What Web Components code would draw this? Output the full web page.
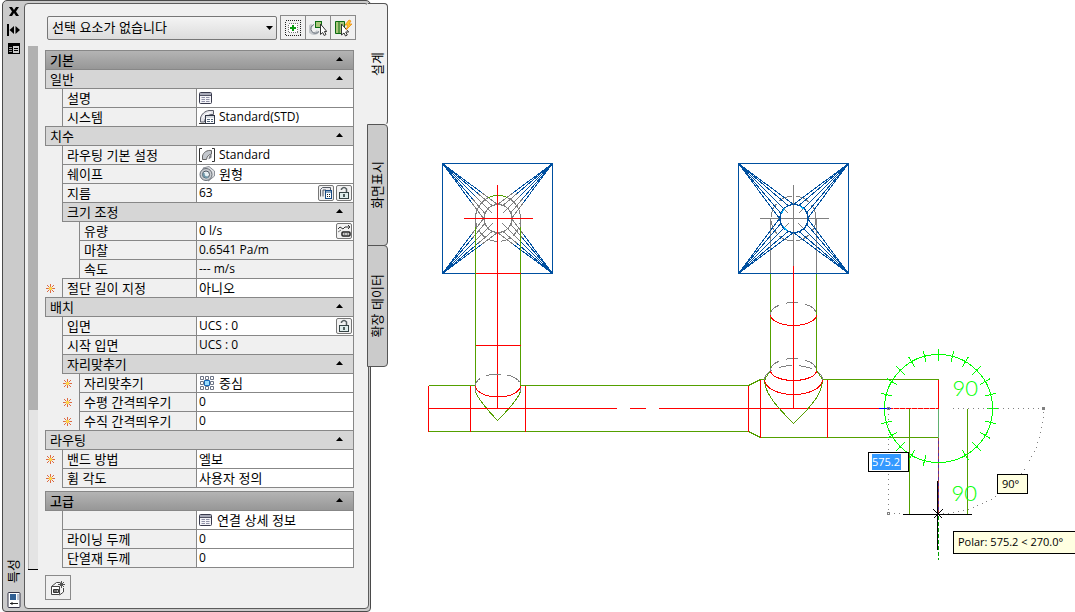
<!DOCTYPE html>
<html lang="ko">
<head>
<meta charset="utf-8">
<title>특성</title>
<style>
html, body { height: 100%; }
body { margin: 0; background: #fff; color: #000; font: 13px/18px "Noto Sans CJK KR", "Noto Sans", sans-serif; overflow: hidden; }
</style>
</head>
<body>
<cad-workspace></cad-workspace>

<script>
const define = (name, html, setup) => {
  const template = document.createElement('template');
  template.innerHTML = html;
  customElements.define(name, class extends HTMLElement {
    constructor() {
      super();
      this.attachShadow({ mode: 'open' }).append(template.content.cloneNode(true));
    }
    connectedCallback() {
      if (setup && !this.ready) { this.ready = true; setup(this, this.shadowRoot); }
    }
  });
};

/* ---------- icons ---------- */
const ICONS = {
  close: [12, 11, '<path d="M1 1h3l2 3 2-3h3L8 5.500l3 4.500H8L6 7l-2 3H1l3-4.500z" fill="#000"/>'],
  autohide: [13, 12, '<path d="M1 0v12" stroke="#000" stroke-width="2"/><path d="M7 2v8L2.500 6zM8.500 2v8L13 6z" fill="#000"/>'],
  menu: [12, 11, '<path d="M0 0h12v11H0z" fill="#000"/><path d="M5 3h6v7H5z" fill="#ccc"/><path d="M6 5.500h4M6 7.500h4" stroke="#000"/><path d="M1 4.500h3M1 6.500h3M1 8.500h3" stroke="#999"/>'],
  palette: [14, 16, '<rect x="1" y=".5" width="12" height="15" rx="1" fill="#fff" stroke="#334"/><path d="M3 2h6v6H3z" fill="#2f5f93"/><path d="M10 2h2v6h-2z" fill="#b8c4d4"/><path d="M3 11.500h8M5 10v3" stroke="#222"/>'],
  select: [18, 18, '<g fill="none" shape-rendering="crispEdges"><rect x="1.500" y="1.500" width="15" height="15" stroke="#222" stroke-dasharray="1 1"/><rect x="4.500" y="4.500" width="9" height="9" fill="#fff" stroke="#777" stroke-dasharray="1 1"/></g><path d="M8 6h2v2h2v2h-2v2H8v-2H6V8h2z" fill="#0a9a12"/>'],
  pick: [18, 18, '<path d="M3 6a4.500 4.500 0 1 0 6 6" fill="none" stroke="#c4c8cc" stroke-width="3"/><path d="M5 5.500a4.500 4.500 0 1 0 5 7" fill="none" stroke="#68707a"/><rect x="6.500" y="2.500" width="6" height="6" fill="#aac77a" stroke="#0b6b12"/><path d="M11.500 5v10.500l2.200-2 1.500 3 1.800-1-1.600-3h2.400z" fill="#fff" stroke="#333"/>'],
  quick: [18, 18, '<path d="M1.500 2.500h9v12h-9z" fill="#aac77a" stroke="#0b6b12"/><path d="M5 3v11" stroke="#0b6b12"/><path d="M7.500 5v11l2.500-2 1.500 3 1.800-1-1.600-3h3z" fill="#fff" stroke="#333"/><path d="M15 1l-4 5h3l-2 5 6-6h-3l2-3z" fill="#ffcb28" stroke="#ee8b12" stroke-width=".8"/>'],
  sheet: [14, 12, '<rect x=".5" y=".5" width="12" height="11" rx="1" fill="#f4f4f8" stroke="#383a4c"/><path d="M1 2h11" stroke="#a8aab8" stroke-width="2"/><path d="M1 3.500h11" stroke="#505264"/><path d="M2.500 5.500h3.500M7 5.500h3.500M2.500 7.500h3.500M7 7.500h3.500M2.500 9.500h3.500M7 9.500h3.500" stroke="#9092a8"/>'],
  system: [16, 16, '<path d="M1.500 13V9C2.500 5 6 2 10 1.500h4.500v4H12C9.500 6 6 8 5.500 13z" fill="#e4e4ea" stroke="#5a5c68"/><path d="M3.500 9C5 6 8 4 12 3.500" fill="none" stroke="#fff"/><rect x="6.500" y="6.500" width="9" height="8" fill="#fff" stroke="#303646"/><path d="M7 8h8" stroke="#b0b8c4"/><path d="M8 10.500h3M12 10.500h2M8 12.500h3M12 12.500h2" stroke="#53667c"/><path d="M0 14.500h6" stroke="#333"/>'],
  routing: [16, 16, '<path d="M3 1.500H.5v13H3M13 1.500h2.500v13H13" fill="none" stroke="#333"/><path d="M3.500 12.500V9C4.500 5 8 3 12.500 3.500v3.500C10 7.500 8 9 7.500 12.500z" fill="#c4c8ce" stroke="#666"/><path d="M9.500 12.500c0-2.500 1-4.500 3-5.500v3.500z" fill="#7d8088"/>'],
  round: [16, 16, '<path d="M4 2l6-1.500 5.500 4.500v5l-6 5z" fill="#dfe1e4" stroke="#8c9098"/><circle cx="7" cy="8.500" r="6" fill="#c9ccd0" stroke="#676d75"/><circle cx="7" cy="8.500" r="3.500" fill="#e8f1f5" stroke="#4f5864"/><path d="M5 7a3 3 0 0 0 4 4" fill="none" stroke="#6f98aa" stroke-width="2"/>'],
  align: [16, 16, '<g fill="#fff" stroke="#6c7486"><path d="M1.500 1.500h3v3h-3zM6.500 1.500h3v3h-3zM11.500 1.500h3v3h-3zM1.500 6.500h3v3h-3zM11.500 6.500h3v3h-3zM1.500 11.500h3v3h-3zM6.500 11.500h3v3h-3zM11.500 11.500h3v3h-3z"/></g><path d="M5.500 5.500h5v5h-5z" fill="#98dcff" stroke="#1768b8"/>'],
  lock: [14, 14, '<rect x="2.500" y="6.500" width="9" height="6" fill="#dfeceb" stroke="#354344"/><path d="M4.500 4V3Q7 0 9.500 3V6" fill="none" stroke="#555e60" stroke-width="1.500"/><path d="M7 8v3" stroke="#203030" stroke-width="1.500"/>'],
  calc: [14, 14, '<path d="M1.500 10.500v-7l2-2h8v3M4 10.500V4h3" fill="#e8e8ec" stroke="#555b64"/><rect x="6.500" y="4.500" width="6" height="8" fill="#fff" stroke="#174a83"/><path d="M7 6h5" stroke="#174a83"/><path d="M8 8.500h1m1 0h1M8 10.500h1m1 0h1" stroke="#222"/>'],
  flow: [14, 14, '<path d="M1 5l2-2 3 2 2-2h5M11 1l2 2-2 2" fill="none" stroke="#333"/><path d="M1 8l3-2" stroke="#777"/><rect x="5" y="8" width="8" height="4" rx="1" fill="#fff" stroke="#222" stroke-width="1.500"/><path d="M6.500 10h2m1 0h2" stroke="#222"/>'],
  addset: [18, 18, '<path d="M2.500 7.500l5-4h4M14.500 9v4l-4 3" fill="#fff" stroke="#444"/><path d="M2.500 7.500h8v8h-8z" fill="#fff" stroke="#444"/><path d="M4.500 10.500h5v3h-5z" fill="#bbb" stroke="#333"/><path d="M5 12h3" stroke="#222"/><path d="M12.500 2v7M9 5.500h7M10 3l5 5M15 3l-5 5" stroke="#555"/>'],
  star: [9, 9, '<path d="M4.500 0v9M0 4.500h9M1 1l7 7M8 1l-7 7" stroke="#dd6a43"/><circle cx="4.500" cy="4.500" r="1.800" fill="#ffd94c"/>']
};
define('cad-icon', '<style>:host{display:block;flex:none;line-height:0}svg{display:block}</style>', (el, root) => {
  const [w, h, body] = ICONS[el.getAttribute('name')];
  root.innerHTML += `<svg width="${w}" height="${h}" viewBox="0 0 ${w} ${h}" aria-hidden="true">${body}</svg>`;
});

/* ---------- property grid ---------- */
define('prop-group', `
<style>
:host { display: block; }
button { display: flex; box-sizing: border-box; width: 100%; height: 20px; margin: 0 0 -1px; padding: 0 10px 0 4px; align-items: center; justify-content: space-between;
  border: 1px solid #878787; background: #d6d6d6; font: inherit; color: #000; text-align: left; position: relative; }
:host([major]) button { background: linear-gradient(#b4b4b4, #979797); font-weight: 500; }
:host([sub]) button { width: calc(100% - 17px); margin-left: 17px; }
svg { display: block; margin-bottom: 2px; }
</style>
<button type="button" aria-expanded="true"><span><slot name="title"></slot></span><svg width="7" height="4" viewBox="0 0 7 4" aria-hidden="true"><path d="M0 4 3.500 0 7 4z"/></svg></button>
<slot></slot>`);

define('prop-row', `
<style>
:host { display: grid; grid-template-columns: 17px minmax(0, 134fr) minmax(0, 158fr); height: 20px; margin-bottom: -1px; position: relative; }
:host([sub]) { grid-template-columns: 34px minmax(0, 117fr) minmax(0, 158fr); }
.mark { display: flex; align-items: center; justify-content: flex-end; padding-right: 7px; }
label { box-sizing: border-box; border: 1px solid #878787; border-right: 0; padding-left: 4px; white-space: nowrap; overflow: hidden; }
.value { box-sizing: border-box; display: flex; align-items: center; gap: 4px; border: 1px solid #878787; background: #fff; padding: 0 1px 0 2px; min-width: 0; }
:host([readonly]) .value { background: #f0f0f0; }
input { flex: 1; min-width: 0; height: 18px; margin: 0; padding: 0; border: 0; background: none; font: inherit; color: #000; outline: 0; }
input.latin { font: 12px/18px "Open Sans", "Noto Sans", sans-serif; }
</style>
<span class="mark"></span><label for="v"></label><span class="value"><input id="v"><slot></slot></span>`, (el, root) => {
  root.querySelector('label').textContent = el.getAttribute('label');
  const input = root.querySelector('input');
  input.value = el.getAttribute('value') || '';
  input.readOnly = el.hasAttribute('readonly');
  input.classList.toggle('latin', /^[\x20-\x7e]+$/.test(input.value));
  if (!el.getAttribute('label')) input.setAttribute('aria-label', input.value);
  const icon = name => { const i = document.createElement('cad-icon'); i.setAttribute('name', name); return i; };
  if (el.hasAttribute('marked')) root.querySelector('.mark').append(icon('star'));
  if (el.hasAttribute('icon')) input.before(icon(el.getAttribute('icon')));
});

define('mini-button', `
<style>
:host { display: block; flex: none; margin-left: -2px; }
button { box-sizing: border-box; display: flex; width: 16px; height: 16px; padding: 0; align-items: center; justify-content: center; border: 1px solid #777; border-radius: 2px; background: #f2f2f2; }
</style>
<button type="button"></button>`, (el, root) => {
  const b = root.querySelector('button');
  b.setAttribute('aria-label', el.getAttribute('label'));
  b.innerHTML = `<cad-icon name="${el.getAttribute('icon')}"></cad-icon>`;
});

define('tool-button', `
<style>
:host { display: block; }
button { box-sizing: border-box; display: flex; width: 26px; height: 25px; padding: 0; align-items: center; justify-content: center; border: 1px solid #8a8a8a; background: #f0f0f0; }
</style>
<button type="button"></button>`, (el, root) => {
  const b = root.querySelector('button');
  b.setAttribute('aria-label', el.getAttribute('label'));
  b.innerHTML = `<cad-icon name="${el.getAttribute('icon')}"></cad-icon>`;
});

/* ---------- palette ---------- */
define('palette-tab', `
<style>
:host { display: block; flex: none; height: 121px; }
button { box-sizing: border-box; display: flex; width: 21px; height: 122px; padding: 0 2px 0 0; align-items: center; justify-content: center; border: 1px solid #555; border-radius: 0 4px 4px 0; background: #cbcbcb; font: inherit; color: #000; }
:host([selected]) button { background: #f0f0f0; border-left-color: #f0f0f0; border-bottom-color: #f0f0f0; }
span { writing-mode: vertical-rl; text-orientation: sideways; transform: rotate(180deg); line-height: 18px; }
</style>
<button type="button" role="tab"><span><slot></slot></span></button>`);

define('title-strip', `
<style>
:host { display: flex; flex-direction: column; align-items: center; flex: none; width: 21px; padding: 3px 0 1px; box-sizing: border-box; }
button { display: flex; padding: 0; border: 0; background: none; margin-bottom: 7px; }
.name { writing-mode: vertical-rl; text-orientation: sideways; transform: rotate(180deg); margin: auto 2px 9px 0; line-height: 18px; }
</style>
<button type="button" aria-label="닫기"><cad-icon name="close"></cad-icon></button>
<button type="button" aria-label="자동 숨기기"><cad-icon name="autohide"></cad-icon></button>
<button type="button" aria-label="메뉴"><cad-icon name="menu"></cad-icon></button>
<span class="name">특성</span>
<cad-icon name="palette"></cad-icon>`);

define('property-palette', `
<style>
:host { display: flex; flex: none; height: 100%; padding-left: 2px; }
.frame { box-sizing: border-box; display: flex; width: 369px; border: 1px solid #4a4a4a; border-radius: 5px 5px 4px 4px; background: #cbcbcb; padding: 2px 1px 2px 0; }
.body { flex: 1; min-width: 0; box-sizing: border-box; display: grid; grid-template-columns: 10px minmax(0, 1fr); column-gap: 7px; align-content: start; border: 1px solid #5c5c5c; border-radius: 4px; background: #f0f0f0; padding: 0 14px 0 3px; }
.top { grid-column: 2; display: flex; align-items: flex-start; padding: 11px 0 0 2px; height: 31px; margin-right: -2px; }
.combo { flex: 1; min-width: 0; display: flex; position: relative; margin-right: 3px; }
select { box-sizing: border-box; flex: 1; min-width: 0; height: 24px; margin: 1px 0 0; padding: 0 20px 2px 4px; border: 1px solid #777; border-radius: 2px; appearance: none; color: #000; font: inherit; background: linear-gradient(#f4f4f4, #dcdcdc); }
.combo svg { position: absolute; right: 4px; top: 11px; }
tool-button + tool-button { margin-left: -1px; }
.scroll { box-sizing: border-box; height: 524px; background: linear-gradient(90deg, #b0b0b0 1px, #e4e4e4 1px); border-bottom: 1px solid #000; }
.thumb { height: 364px; background: #b1b1b1; }
.list { padding-top: 4px; }
.last { margin-top: 4px; }
.foot { grid-column: 2; padding-top: 5px; }
.tabs { display: flex; flex-direction: column; margin: 3px 0 0 -4px; position: relative; }
</style>
<div class="frame">
  <title-strip></title-strip>
  <div class="body">
    <div class="top">
      <div class="combo"><select aria-label="선택 요소"><option>선택 요소가 없습니다</option></select>
      <svg width="7" height="4" viewBox="0 0 7 4" aria-hidden="true"><path d="M0 0h7L3.500 4z"/></svg></div>
      <tool-button icon="select" label="객체 선택"></tool-button>
      <tool-button icon="pick" label="유사 항목 선택"></tool-button>
      <tool-button icon="quick" label="신속 선택"></tool-button>
    </div>
    <div class="scroll"><div class="thumb"></div></div>
    <div class="list">
      <prop-group major><span slot="title">기본</span>
        <prop-group><span slot="title">일반</span>
          <prop-row label="설명" icon="sheet"></prop-row>
          <prop-row label="시스템" value="Standard(STD)" icon="system"></prop-row>
        </prop-group>
        <prop-group><span slot="title">치수</span>
          <prop-row label="라우팅 기본 설정" value="Standard" icon="routing"></prop-row>
          <prop-row label="쉐이프" value="원형" icon="round"></prop-row>
          <prop-row label="지름" value="63"><mini-button icon="calc" label="크기 계산"></mini-button><mini-button icon="lock" label="지름 잠금"></mini-button></prop-row>
          <prop-group sub><span slot="title">크기 조정</span>
            <prop-row sub label="유량" value="0 l/s"><mini-button icon="flow" label="유량 계산"></mini-button></prop-row>
            <prop-row sub readonly label="마찰" value="0.6541 Pa/m"></prop-row>
            <prop-row sub readonly label="속도" value="--- m/s"></prop-row>
          </prop-group>
          <prop-row marked label="절단 길이 지정" value="아니오"></prop-row>
        </prop-group>
        <prop-group><span slot="title">배치</span>
          <prop-row label="입면" value="UCS : 0"><mini-button icon="lock" label="입면 잠금"></mini-button></prop-row>
          <prop-row readonly label="시작 입면" value="UCS : 0"></prop-row>
          <prop-group sub><span slot="title">자리맞추기</span>
            <prop-row sub marked label="자리맞추기" value="중심" icon="align"></prop-row>
            <prop-row sub marked label="수평 간격띄우기" value="0"></prop-row>
            <prop-row sub marked label="수직 간격띄우기" value="0"></prop-row>
          </prop-group>
        </prop-group>
        <prop-group><span slot="title">라우팅</span>
          <prop-row marked label="밴드 방법" value="엘보"></prop-row>
          <prop-row marked label="휨 각도" value="사용자 정의"></prop-row>
        </prop-group>
      </prop-group>
      <prop-group major class="last"><span slot="title">고급</span>
        <prop-row label="" value="연결 상세 정보" icon="sheet"></prop-row>
        <prop-row label="라이닝 두께" value="0"></prop-row>
        <prop-row label="단열재 두께" value="0"></prop-row>
      </prop-group>
    </div>
    <div class="foot"><tool-button icon="addset" label="특성 세트 추가"></tool-button></div>
  </div>
</div>
<div class="tabs" role="tablist">
  <palette-tab selected>설계</palette-tab>
  <palette-tab>화면표시</palette-tab>
  <palette-tab>확장 데이터</palette-tab>
</div>`);

/* ---------- drawing canvas ---------- */
/* Square-to-round transition seen from above: four corners fan out to the collar. */
const fan = (cx, cy, from, to, r) => {
  let d = '';
  for (const sx of [-1, 1]) for (const sy of [-1, 1]) for (const a of [0, 22.5, 45, 67.5, 90]) {
    const t = a * Math.PI / 180, ax = cx + sx * 55, ay = cy + sy * 55;
    const bx = cx + sx * r * Math.cos(t), by = cy + sy * r * Math.sin(t);
    d += `M${ax + (bx - ax) * from} ${ay + (by - ay) * from}L${ax + (bx - ax) * to} ${ay + (by - ay) * to}`;
  }
  return d;
};
/* Hidden edges of the collar, inside the round end. */
const stubs = (cx, cy) => {
  let d = '';
  for (const sx of [-1, 1]) for (const sy of [-1, 1])
    d += `M${cx + sx * 5} ${cy + sy * 5}l${sx * 11} ${sy * 11}`;
  return d;
};
const ticks = () => {
  let d = '';
  for (let i = 0; i < 24; i++) {
    if (i === 6 || i === 5) continue;
    const t = i * Math.PI / 12, c = Math.cos(t), s = Math.sin(t);
    d += `M${938 + 48 * c} ${408 + 48 * s}L${938 + 60 * c} ${408 + 60 * s}`;
  }
  return d;
};

define('drawing-canvas', `
<style>
:host { display: block; flex: 1; min-width: 0; position: relative; overflow: hidden; }
svg { display: block; width: 100%; height: 100%; }
.g { stroke: #54a000; } .r { stroke: #f00; } .b { stroke: #0050a0; } .h { stroke: #808080; } .k { stroke: #000; } .l { stroke: #0f0; }
text { fill: #0f0; stroke: none; font: 300 22px Lato, "Noto Sans", sans-serif; }
.dyn, .tip { position: absolute; box-sizing: border-box; border: 1px solid #000; font: 11px/18px "Open Sans", "Noto Sans", sans-serif; }
.dyn { left: 480px; top: 452px; width: 41px; height: 20px; background: #fff; padding: 1px 3px; }
input { display: block; box-sizing: border-box; width: 29px; height: 16px; border: 0; padding: 0; margin: 0; background: #3399ff; color: #fff; font: inherit; line-height: 16px; }
.tip { background: #ffffe1; white-space: nowrap; padding: 0 4px; }
.angle { left: 609px; top: 474px; width: 31px; height: 20px; }
.polar { left: 565px; top: 531px; width: 130px; height: 23px; line-height: 20px; }
</style>
<svg aria-label="덕트 도면"><g transform="translate(-387.5 .5)" fill="none" shape-rendering="crispEdges"></g></svg>
<div class="dyn"><input aria-label="거리" value="575.2"></div>
<div class="tip angle">90°</div>
<div class="tip polar">Polar: 575.2 &lt; 270.0°</div>`, (el, root) => {
  root.querySelector('svg g').innerHTML = `
  <path class="b" d="M442 163h110v110h-110z"/>
  <path class="b" d="${fan(497, 218, 0, .72, 14)}"/>
  <path class="h" d="${fan(497, 218, .72, 1, 14)}${stubs(497, 218)}"/>
  <circle class="h" cx="497.500" cy="218" r="14" stroke-width="1.200"/>
  <path class="h" d="M475 226V216M520 226V216M475 218a22.500 23 0 0 1 45 0" />
  <path class="g" d="M488 197q10-4 19 0"/>
  <path class="h" d="M475 218a22.500 23 0 0 0 45 0" stroke-dasharray="9 4"/>
  <path class="g" d="M475 226V391Q478 400 497 420Q517 400 520 391V226M428 385H475M520 385H748L760 379H765M428 431H748L760 437H938M822 379H938"/>
  <path class="r" d="M475 273H520M475 345H520M463 218H532M497 184V408M428 385V431M470 385V431M525 385V431M428 408H616M629 408H645M658 408H938"/>
  <path class="h" d="M475 391V385A22.500 11.500 0 0 1 520 385V391" stroke-dasharray="15 6"/>
  <path class="r" d="M475 385A22.500 11.500 0 0 0 520 385"/>

  <path class="h" d="M759 218H828M793 184V265M770 273V218M816 273V218${stubs(793, 218)}"/>
  <circle class="h" cx="793" cy="218" r="22.500" stroke-dasharray="14 4"/>
  <path class="b" d="M738 163h110v110H738z${fan(793, 218, 0, 1, 14)}"/>
  <circle class="b" cx="793.500" cy="218" r="14" stroke-width="1.400"/>
  <path d="M781 213l3-5M783 226l4 5M800 206l4 3" stroke="#00b4ff"/>
  <path class="g" d="M770 273V370M816 273V370L822 379M770 370L764 379C764 391 772 402 793 423C815 402 822 391 822 379"/>
  <path class="h" d="M770 314A23 12 0 0 1 816 314M770 370A23 12 0 0 1 816 370M764 379A29 14 0 0 1 822 379" stroke-dasharray="13 7"/>
  <path class="r" d="M793 265V408M770 314A23 11 0 0 0 816 314M770 370A23 10 0 0 0 816 370M764 379A29 15 0 0 0 822 379M748 385V431M760 379V437M827 379V437M938 379V408"/>

  <path class="g" d="M909 408V513M967 408V513"/>
  <path d="M938 408V437" stroke="#60b070"/>
  <path d="M938 437V513" stroke="#5b2a9a"/><path d="M938 437V513" stroke="#a04040" stroke-dasharray="3 3"/>
  <path d="M892 408H937" stroke="#ff9c9c" stroke-dasharray="1 5"/>
  <circle class="l" cx="938" cy="408" r="54"/>
  <path class="l" d="${ticks()}"/>
  <path d="M878 408H890" stroke="#00f"/>
  <path class="h" d="M952 408H1043A105 105 0 0 1 938 513M888 408V513H902" stroke-dasharray="1 4"/>
  <path class="h" d="M887 407h2v2h-2zM887 512h2v2h-2zM1042 407h2v2h-2z"/>
  <path d="M938 515V559" stroke="#00a000" stroke-dasharray="4 2"/>
  <path class="k" d="M902 514H971M937 480V549M933 509l9 9M942 509l-9 9"/>
  <text x="952" y="395">90</text><text x="951" y="500">90</text>`;
});

define('cad-workspace', `
<style>:host { display: flex; height: 100vh; min-height: 612px; }</style>
<property-palette></property-palette>
<drawing-canvas></drawing-canvas>`);
</script>
</body>
</html>
